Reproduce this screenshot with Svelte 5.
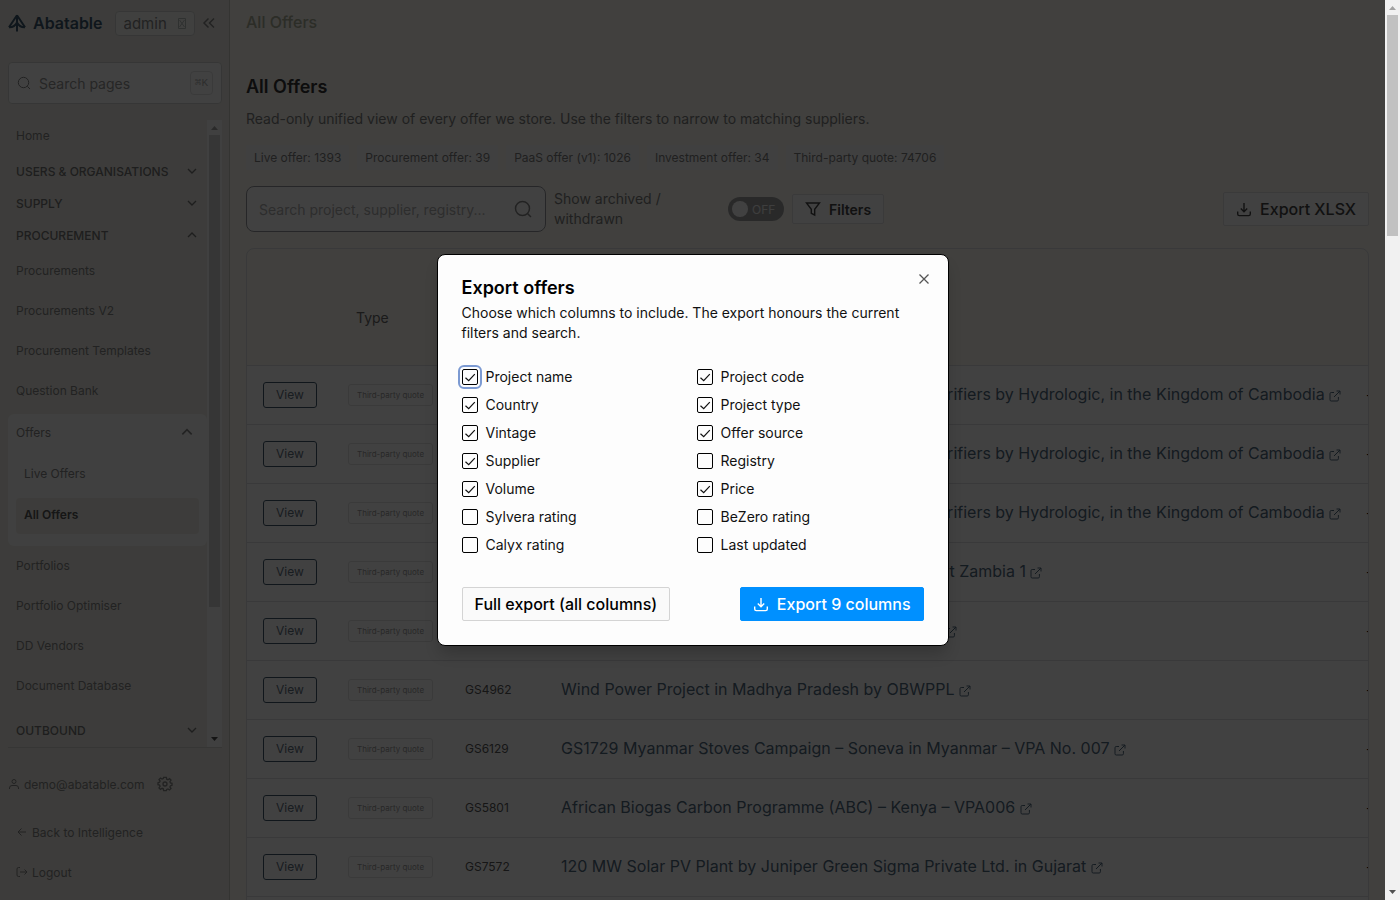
<script lang="ts">
  type NavGroup = { title: string; open: boolean };
  type Offer = { type: string; code: string; name: string };
  type Column = { key: string; label: string; included: boolean };

  const groups: NavGroup[] = [
    { title: 'Users & Organisations', open: false },
    { title: 'Supply', open: false },
    { title: 'Procurement', open: true },
  ];

  const procurementLinks = ['Procurements', 'Procurements V2', 'Procurement Templates', 'Question Bank'];
  const portfolioLinks = ['Portfolios', 'Portfolio Optimiser', 'DD Vendors', 'Document Database'];

  const counts = [
    { label: 'Live offer', value: 1393 },
    { label: 'Procurement offer', value: 39 },
    { label: 'PaaS offer (v1)', value: 1026 },
    { label: 'Investment offer', value: 34 },
    { label: 'Third-party quote', value: 74706 },
  ];

  const purifiers =
    'Production and Dissemination of Ceramic Water Purifiers by Hydrologic, in the Kingdom of Cambodia';

  const offers: Offer[] = [
    { type: 'Third-party quote', code: 'GS1020', name: purifiers },
    { type: 'Third-party quote', code: 'GS1020', name: purifiers },
    { type: 'Third-party quote', code: 'GS1020', name: purifiers },
    { type: 'Third-party quote', code: 'GS4290', name: 'Improved Cookstove and Safe Water Access Project Zambia 1' },
    { type: 'Third-party quote', code: 'GS5047', name: 'Solar Power Project in Rajasthan, by Green Energy' },
    { type: 'Third-party quote', code: 'GS4962', name: 'Wind Power Project in Madhya Pradesh by OBWPPL' },
    { type: 'Third-party quote', code: 'GS6129', name: 'GS1729 Myanmar Stoves Campaign – Soneva in Myanmar – VPA No. 007' },
    { type: 'Third-party quote', code: 'GS5801', name: 'African Biogas Carbon Programme (ABC) – Kenya – VPA006' },
    { type: 'Third-party quote', code: 'GS7572', name: '120 MW Solar PV Plant by Juniper Green Sigma Private Ltd. in Gujarat' },
    { type: 'Third-party quote', code: 'GS7572', name: '120 MW Solar PV Plant by Juniper Green Sigma Private Ltd. in Gujarat' },
  ];

  let columns: Column[] = $state([
    { key: 'name', label: 'Project name', included: true },
    { key: 'code', label: 'Project code', included: true },
    { key: 'country', label: 'Country', included: true },
    { key: 'type', label: 'Project type', included: true },
    { key: 'vintage', label: 'Vintage', included: true },
    { key: 'source', label: 'Offer source', included: true },
    { key: 'supplier', label: 'Supplier', included: true },
    { key: 'registry', label: 'Registry', included: false },
    { key: 'volume', label: 'Volume', included: true },
    { key: 'price', label: 'Price', included: true },
    { key: 'sylvera', label: 'Sylvera rating', included: false },
    { key: 'bezero', label: 'BeZero rating', included: false },
    { key: 'calyx', label: 'Calyx rating', included: false },
    { key: 'updated', label: 'Last updated', included: false },
  ]);

  let focusedKey = $state('name');
  let dialogOpen = $state(true);
  let showArchived = $state(false);

  let includedCount = $derived(columns.filter((c) => c.included).length);
</script>

{#snippet chevron(up: boolean, size: number)}
  <svg class="chevron" class:up width={size} height={size} viewBox="0 0 12 12" aria-hidden="true">
    <path d="M2 4l4 4 4-4" />
  </svg>
{/snippet}

{#snippet downloadIcon()}
  <svg class="download" width="16" height="16" viewBox="0 0 16 16" aria-hidden="true">
    <path d="M8 2v8.500M4.800 7.500L8 10.700l3.200-3.200M1.700 10.500V13a1.600 1.600 0 0 0 1.600 1.600h9.400a1.600 1.600 0 0 0 1.600-1.600v-2.500" />
  </svg>
{/snippet}

{#snippet scrollbar(size: number)}
  <div class="scrollbar" aria-hidden="true">
    <svg class="arrow dim" width="15" height="15" viewBox="0 0 15 15"><path d="M7.500 6L11 10H4z" /></svg>
    <div class="track">
      <div class="thumb" style="height: {size}%"></div>
    </div>
    <svg class="arrow" width="15" height="15" viewBox="0 0 15 15"><path d="M4 5h7L7.500 9z" /></svg>
  </div>
{/snippet}

<div class="window">
  <div class="page">
    <aside class="sidebar">
      <header class="brand-row">
        <a class="brand" href="#home">
          <svg width="18" height="18" viewBox="0 0 18 18" aria-hidden="true">
            <path d="M9 1v16.500M9 1.200L1 13.200M9 1.200l8 12M1 13.200c4 .2 6.500-1.700 8-4.700 1.500 3 4 4.900 8 4.700" />
          </svg>
          Abatable
        </a>
        <div class="role">
          <select aria-label="Role">
            <option>admin</option>
          </select>
          <svg width="8" height="11" viewBox="0 0 8 11" aria-hidden="true">
            <path d="M.5.500h7v10h-7zM1.500 2l5 7M6.500 2l-5 7" />
          </svg>
        </div>
        <button class="collapse" aria-label="Collapse sidebar">
          <svg width="14" height="12" viewBox="0 0 14 12" aria-hidden="true">
            <path d="M6.500 1.500L2 6l4.500 4.500M12 1.500L7.500 6l4.500 4.500" />
          </svg>
        </button>
      </header>

      <label class="page-search">
        <svg width="14" height="14" viewBox="0 0 14 14" aria-hidden="true">
          <circle cx="6.500" cy="6.500" r="5.200" /><path d="M10.300 10.300L13 13" />
        </svg>
        <input type="text" placeholder="Search pages" aria-label="Search pages" />
        <kbd>⌘K</kbd>
      </label>

      <div class="nav-area">
        <nav>
          <a class="nav-link home" href="#home">Home</a>
          {#each groups as group}
            <button class="nav-group">{group.title} {@render chevron(group.open, 12)}</button>
          {/each}
          {#each procurementLinks as link}
            <a class="nav-link" href="#{link}">{link}</a>
          {/each}
          <div class="nav-card">
            <button class="card-head">Offers {@render chevron(true, 14)}</button>
            <a class="sub-link" href="#live">Live Offers</a>
            <a class="sub-link active" href="#all">All Offers</a>
          </div>
          {#each portfolioLinks as link}
            <a class="nav-link" href="#{link}">{link}</a>
          {/each}
          <button class="nav-group last">Outbound {@render chevron(false, 12)}</button>
        </nav>
        {@render scrollbar(79)}
      </div>

      <footer>
        <div class="user">
          <svg width="12" height="12" viewBox="0 0 12 12" aria-hidden="true">
            <circle cx="6" cy="3.500" r="2" /><path d="M1.500 11V10a2.500 2.500 0 0 1 2.500-2.500h4a2.500 2.500 0 0 1 2.500 2.500v1" />
          </svg>
          <span>demo@abatable.com</span>
          <button class="gear" aria-label="Settings">
            <svg width="16" height="16" viewBox="0 0 24 24" aria-hidden="true">
              <circle cx="12" cy="12" r="3" />
              <path d="M10 2h4l.6 2.800 1.800.8L18.800 4 21 6.200l-1.600 2.400.8 1.800 2.300.6v3l-2.300.6-.8 1.800 1.600 2.400-2.200 2.200-2.400-1.600-1.800.8L14 22h-4l-.6-2.800-1.800-.8L5.200 20 3 17.800l1.600-2.400-.8-1.800L1.500 13v-3l2.300-.6.8-1.800L3 5.200 5.200 3l2.400 1.600 1.800-.8z" />
            </svg>
          </button>
        </div>
        <a class="foot-link" href="#back">
          <svg width="12" height="12" viewBox="0 0 12 12" aria-hidden="true"><path d="M10 6H2M5.500 2.500L2 6l3.500 3.500" /></svg>
          Back to Intelligence
        </a>
        <a class="foot-link" href="#logout">
          <svg width="12" height="12" viewBox="0 0 12 12" aria-hidden="true">
            <path d="M4 1.500H2.500a1.500 1.500 0 0 0-1.500 1.500v6a1.500 1.500 0 0 0 1.500 1.500H4M4 6h7M8.500 3.500L11 6 8.500 8.500" />
          </svg>
          Logout
        </a>
      </footer>
    </aside>

    <main>
      <div class="topbar">All Offers</div>
      <section class="content">
        <h1>All Offers</h1>
        <p class="intro">
          Read-only unified view of every offer we store. Use the filters to narrow to matching suppliers.
        </p>
        <div class="counts">
          {#each counts as count}
            <span class="count">{count.label}: {count.value}</span>
          {/each}
        </div>

        <div class="toolbar">
          <label class="offer-search">
            <input type="text" placeholder="Search project, supplier, registry..." aria-label="Search offers" />
            <svg width="20" height="20" viewBox="0 0 20 20" aria-hidden="true">
              <circle cx="9.500" cy="9.500" r="7" /><path d="M14.500 14.500L18 18" />
            </svg>
          </label>
          <label class="archived" for="archived">Show archived / withdrawn</label>
          <label class="toggle">
            <input id="archived" type="checkbox" bind:checked={showArchived} />
            <span class="knob"></span>
            <span>{showArchived ? 'ON' : 'OFF'}</span>
          </label>
          <button class="filters">
            <svg width="16" height="16" viewBox="0 0 16 16" aria-hidden="true">
              <path d="M1.500 2h13L9.700 8.300V14l-3.400-1.700v-4z" />
            </svg>
            Filters
          </button>
          <button class="export-open" onclick={() => (dialogOpen = true)}>
            {@render downloadIcon()} Export XLSX
          </button>
        </div>

        <div class="table-box">
          <table>
            <colgroup>
              <col class="col-view" />
              <col class="col-type" />
              <col class="col-code" />
              <col class="col-name" />
              <col class="col-more" />
            </colgroup>
            <thead>
              <tr>
                <th></th>
                <th class="type-head">Type</th>
                <th>Code</th>
                <th>Project</th>
                <th></th>
              </tr>
            </thead>
            <tbody>
              {#each offers as offer}
                <tr>
                  <td><button class="view">View</button></td>
                  <td><span class="badge">{offer.type}</span></td>
                  <td class="code">{offer.code}</td>
                  <td class="name">
                    <a href="#{offer.code}">
                      {offer.name}
                      <svg width="12" height="12" viewBox="0 0 12 12" aria-hidden="true">
                        <path d="M5 2.500H2.200A1.200 1.200 0 0 0 1 3.700v6A1.200 1.200 0 0 0 2.200 11h6a1.200 1.200 0 0 0 1.200-1.200V7M7.500 1H11v3.500M11 1L5 7" />
                      </svg>
                    </a>
                  </td>
                  <td>-</td>
                </tr>
              {/each}
            </tbody>
          </table>
        </div>
      </section>
    </main>

    {#if dialogOpen}
      <div class="overlay">
        <div class="dialog" role="dialog" aria-modal="true" aria-labelledby="export-title">
          <h2 id="export-title">Export offers</h2>
          <p>Choose which columns to include. The export honours the current filters and search.</p>
          <div class="column-grid">
            {#each columns as column (column.key)}
              <label class="column">
                <span class="tick" class:focused={focusedKey === column.key}>
                  <input
                    type="checkbox"
                    bind:checked={column.included}
                    onfocus={() => (focusedKey = column.key)}
                  />
                  {#if column.included}
                    <svg width="16" height="16" viewBox="0 0 16 16" aria-hidden="true">
                      <path d="M3.500 8.700L6.700 11.700 12.800 5.200" />
                    </svg>
                  {/if}
                </span>
                {column.label}
              </label>
            {/each}
          </div>
          <div class="actions">
            <button class="full">Full export (all columns)</button>
            <button class="primary">{@render downloadIcon()} Export {includedCount} columns</button>
          </div>
          <button class="close" aria-label="Close" onclick={() => (dialogOpen = false)}>
            <svg width="16" height="16" viewBox="0 0 16 16" aria-hidden="true"><path d="M3.500 3.500l9 9M12.500 3.500l-9 9" /></svg>
          </button>
        </div>
      </div>
    {/if}
  </div>
  {@render scrollbar(25.4)}
</div>

<style>
  :global(body) {
    margin: 0;
  }

  .window,
  .window * {
    box-sizing: border-box;
  }

  .window {
    display: flex;
    height: 100vh;
    overflow: hidden;
    font-family: Inter, 'Liberation Sans', sans-serif;
    font-size: 14px;
    color: #111;
  }

  .page {
    position: relative;
    display: flex;
    flex: 1;
    min-width: 0;
  }

  button,
  input,
  select {
    font: inherit;
    color: inherit;
  }

  button {
    display: flex;
    align-items: center;
    padding: 0;
    border: 0;
    background: none;
    cursor: pointer;
    white-space: nowrap;
  }

  input,
  select {
    min-width: 0;
    padding: 0;
    border: 0;
    outline: 0;
    background: none;
    appearance: none;
  }

  a {
    color: inherit;
    text-decoration: none;
  }

  svg {
    flex: none;
    fill: none;
    stroke: currentColor;
  }

  /* Scrollbars */
  .scrollbar {
    display: flex;
    flex-direction: column;
    flex: none;
    width: 15px;
    background: #f1f1f1;
  }

  .track {
    flex: 1;
    padding: 0 2px;
  }

  .thumb {
    background: #c1c1c1;
  }

  .arrow {
    fill: #505050;
    stroke: none;
  }

  .arrow.dim {
    fill: #a3a3a3;
  }

  .nav-area .scrollbar {
    background: #f6f6f7;
  }

  .nav-area .thumb {
    background: #d0d0d2;
  }

  /* Sidebar */
  .sidebar {
    display: flex;
    flex-direction: column;
    flex: none;
    width: 230px;
    padding: 0 7px 0 8px;
    border-right: 1px solid #c8c7c2;
    background: #ebe9e2;
    color: #848484;
    font-size: 12px;
  }

  .brand-row {
    display: flex;
    align-items: center;
    height: 46px;
    margin-bottom: 16px;
  }

  .brand {
    display: flex;
    align-items: center;
    gap: 7px;
    color: #3c576c;
    font-size: 16px;
    font-weight: 600;
  }

  .brand svg {
    stroke-width: 2;
  }

  .role {
    display: flex;
    align-items: center;
    justify-content: space-between;
    width: 80px;
    height: 25px;
    margin-left: 12px;
    padding: 0 8px;
    border: 1px solid #d2d2d0;
    border-radius: 4px;
    background: #f6f6f4;
    font-size: 15px;
  }

  .role svg {
    color: #b4bcb9;
  }

  .collapse {
    margin-left: 7px;
  }

  .collapse svg {
    stroke-width: 1.5;
  }

  .page-search {
    display: flex;
    align-items: center;
    gap: 8px;
    height: 42px;
    margin-bottom: 16px;
    padding: 0 8px;
    border: 1px solid #d2d2d0;
    border-radius: 4px;
    background: #fcfcfc;
    font-size: 14px;
  }

  .page-search input {
    flex: 1;
  }

  .page-search input::placeholder {
    color: #939393;
    opacity: 1;
  }

  kbd {
    padding: 0 4px;
    border: 1px solid #dedede;
    border-radius: 4px;
    color: #b0b0b0;
    font-family: 'Liberation Mono', monospace;
    font-size: 11px;
    line-height: 22px;
  }

  .nav-area {
    display: flex;
    flex: 1;
    min-height: 0;
    border-bottom: 1px solid #d0cfcc;
  }

  nav {
    flex: 1;
    overflow: hidden;
  }

  .nav-link {
    display: block;
    padding: 0 8px;
    line-height: 40px;
  }

  .home {
    margin-bottom: 3px;
    line-height: 32px;
  }

  .nav-group {
    justify-content: space-between;
    width: 100%;
    height: 32px;
    padding: 0 9px 0 8px;
    color: #747474;
    font-size: 12px;
    font-weight: 500;
    text-transform: uppercase;
  }

  .nav-group.last {
    margin-top: 8px;
  }

  .chevron {
    stroke-width: 1.4;
  }

  .chevron.up {
    transform: rotate(180deg);
  }

  .nav-card {
    margin-top: 3px;
    padding: 0 8px 12px;
    border-radius: 6px;
    background: #f7f7f7;
  }

  .card-head {
    justify-content: space-between;
    width: 100%;
    height: 36px;
    margin-bottom: 4px;
    padding-right: 5px;
  }

  .sub-link {
    display: block;
    padding: 0 8px;
    line-height: 40px;
  }

  .sub-link.active {
    margin-top: 4px;
    padding-bottom: 2px;
    border-radius: 4px;
    background: #ebe9e2;
    color: #555;
    font-weight: 600;
    line-height: 34px;
  }

  footer {
    padding: 16px 0 8px;
  }

  .user {
    display: flex;
    align-items: center;
    gap: 4px;
    height: 40px;
    margin-bottom: 8px;
  }

  .gear {
    margin-left: 8px;
  }

  .gear svg {
    stroke-width: 2;
  }

  .foot-link {
    display: flex;
    align-items: center;
    gap: 4px;
    height: 40px;
    padding: 0 8px;
  }

  /* Main area */
  main {
    flex: 1;
    min-width: 0;
    overflow: hidden;
    background: #f9f7ef;
  }

  .topbar {
    height: 45px;
    padding: 0 16px;
    color: #a9ac98;
    font-size: 16px;
    font-weight: 500;
    line-height: 44px;
  }

  .content {
    padding: 28px 16px 0;
  }

  h1 {
    margin: 0 0 8px;
    color: #333;
    font-size: 18px;
    font-weight: 600;
    line-height: 28px;
  }

  .intro {
    margin: 0 0 16px;
    color: #7c7c7c;
    line-height: 20px;
  }

  .counts {
    display: flex;
    gap: 8px;
    margin-bottom: 16px;
  }

  .count {
    padding: 0 8px;
    border-radius: 2px;
    background: #f6f6f8;
    color: #7c7c7c;
    font-size: 12px;
    line-height: 25px;
  }

  .toolbar {
    display: flex;
    align-items: center;
    gap: 8px;
    margin-bottom: 16px;
  }

  .offer-search {
    display: flex;
    align-items: center;
    width: 300px;
    height: 46px;
    padding: 0 12px;
    border: 1px solid #94959b;
    border-radius: 8px;
    background: #fcfcfc;
  }

  .offer-search input {
    flex: 1;
  }

  .offer-search input::placeholder {
    color: #adadad;
    opacity: 1;
  }

  .offer-search svg {
    color: #858585;
    stroke-width: 1.5;
  }

  .archived {
    width: 166px;
    padding-right: 32px;
    color: #7c7c7c;
    line-height: 20px;
  }

  .toggle {
    display: flex;
    align-items: center;
    gap: 4px;
    width: 56px;
    height: 24px;
    padding: 0 4px;
    border-radius: 12px;
    background: #a0a0a0;
    color: #eee;
    font-size: 12px;
  }

  .toggle input {
    width: 0;
    margin: 0 -4px 0 0;
  }

  .knob {
    width: 16px;
    height: 16px;
    border-radius: 50%;
    background: #fcfcfc;
  }

  .filters {
    gap: 8px;
    height: 30px;
    padding: 0 12px;
    border: 1px solid #dedee0;
    border-radius: 2px;
    background: #fafafa;
    color: #444;
    font-weight: 600;
  }

  .filters svg {
    stroke-width: 1.4;
  }

  .export-open,
  .actions button {
    gap: 8px;
    height: 34px;
    padding: 0 12px;
    border: 1px solid #dedee0;
    border-radius: 2px;
    background: #fafafa;
    font-size: 16px;
    font-weight: 500;
  }

  .export-open {
    margin-left: auto;
    color: #444;
  }

  .download {
    stroke-width: 1.4;
  }

  .table-box {
    overflow: hidden;
    border: 1px solid #dcdcde;
    border-radius: 8px 8px 0 0;
  }

  table {
    width: 1200px;
    border-collapse: collapse;
    table-layout: fixed;
  }

  .col-view {
    width: 85px;
  }

  .col-type {
    width: 117px;
  }

  .col-code {
    width: 96px;
  }

  .col-name {
    width: 805px;
  }

  th {
    height: 116px;
    padding: 22px 16px 0;
    color: #666;
    font-weight: 400;
    text-align: left;
  }

  .type-head {
    padding-left: 24px;
  }

  tbody tr {
    border-top: 1px solid #dcdcde;
    background: #fcfcfc;
  }

  td {
    height: 59px;
    padding: 0 16px;
    white-space: nowrap;
  }

  .view {
    height: 26px;
    padding: 0 12px;
    border: 1px solid #40566a;
    border-radius: 3px;
    color: #5f6f7e;
    font-size: 12px;
  }

  .badge {
    display: inline-block;
    padding: 0 8px;
    border: 1px solid #e0e0e0;
    border-radius: 3px;
    color: #999;
    font-size: 8px;
    line-height: 20px;
  }

  .code {
    color: #555;
    font-size: 12px;
  }

  .name {
    padding-bottom: 2px;
    color: #50687c;
    font-size: 16px;
  }

  .name svg {
    vertical-align: -2px;
  }

  /* Export dialog */
  .overlay {
    position: absolute;
    inset: 0;
    display: grid;
    place-items: center;
    background: rgba(0, 0, 0, 0.74);
  }

  .dialog {
    position: relative;
    width: 512px;
    padding: 24px;
    border: 1px solid #000;
    border-radius: 8px;
    background: #fdfdfd;
    box-shadow: 0 10px 15px -3px rgba(0, 0, 0, 0.2);
    color: #111;
  }

  h2 {
    margin: 0 0 6px;
    color: #000;
    font-size: 18px;
    font-weight: 600;
    line-height: 18px;
  }

  .dialog p {
    margin: 0 0 24px;
    line-height: 20px;
  }

  .column-grid {
    display: grid;
    grid-template-columns: 1fr 1fr;
    gap: 8px;
    margin-bottom: 32px;
  }

  .column {
    display: flex;
    align-items: center;
    gap: 8px;
    line-height: 20px;
  }

  .tick {
    display: grid;
    border-radius: 2px;
  }

  .tick.focused {
    outline: 2px solid #7c9ad2;
    outline-offset: 2px;
  }

  .tick input {
    grid-area: 1 / 1;
    width: 16px;
    height: 16px;
    margin: 0;
    border: 1px solid #000;
    border-radius: 2px;
  }

  .tick svg {
    grid-area: 1 / 1;
    pointer-events: none;
    stroke-width: 1.2;
  }

  .actions {
    display: flex;
    justify-content: space-between;
  }

  .actions .full {
    border-color: #d4d4d4;
    color: #000;
  }

  .actions .primary {
    border-color: #0090ff;
    background: #0090ff;
    color: #fff;
  }

  .close {
    position: absolute;
    top: 16px;
    right: 16px;
    color: #555;
  }

  .close svg {
    stroke-width: 1.3;
  }
</style>
